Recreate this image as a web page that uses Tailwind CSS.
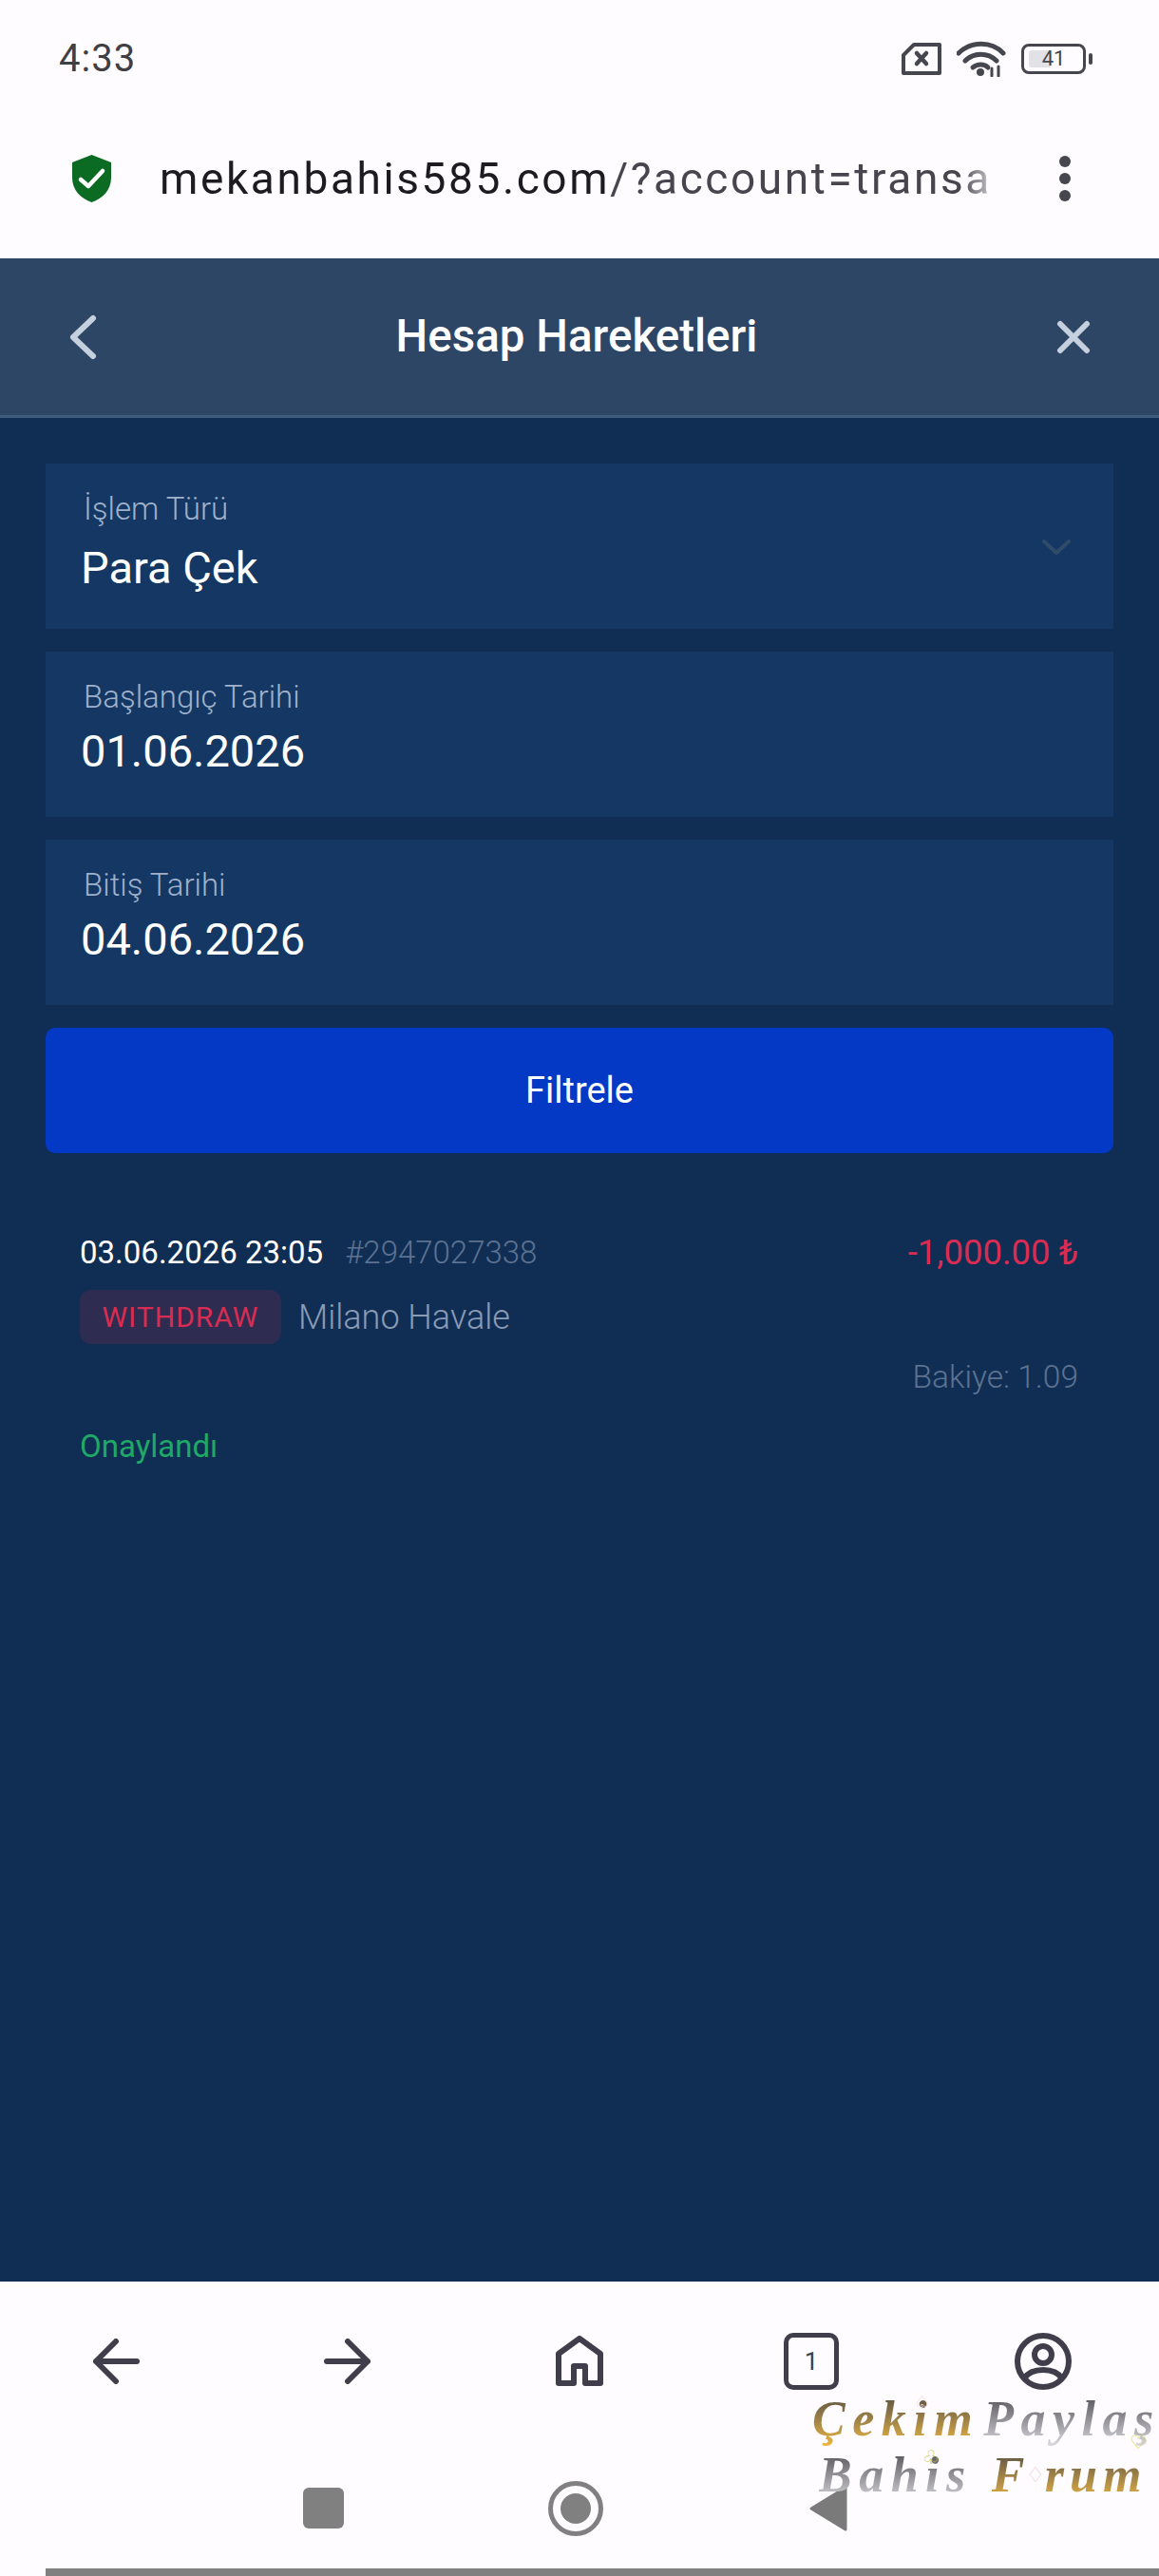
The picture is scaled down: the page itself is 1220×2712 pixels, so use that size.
<!DOCTYPE html>
<html lang="tr">
<head>
    <meta charset="UTF-8">
    <meta name="viewport" content="width=device-width, initial-scale=1.0">
    <title>Hesap Hareketleri</title>
    <script src="https://cdn.jsdelivr.net/npm/@tailwindcss/browser@4"></script>
</head>
<body class="bg-[#fefcff] [font-family:Roboto,sans-serif]">
<div class="relative flex h-[2712px] w-[1220px] flex-col overflow-hidden">

    <!-- status bar -->
    <div class="flex h-[124px] shrink-0 items-center justify-between pl-[62px] pr-[70px]">
        <span class="text-[40px] leading-none tracking-[1px] text-[#3f3f44]">4:33</span>
        <div class="flex items-center">
            <svg class="h-[36px] w-[44px]" viewBox="0 0 44 36" fill="none" stroke="#46464f" stroke-width="4" stroke-linejoin="round">
                <path d="M14 3H41V33H3V14Z"/>
                <path d="M17 12L27 23M27 12L17 23" stroke-width="4.5" stroke-linecap="round"/>
            </svg>
            <svg class="ml-[15px] h-[38px] w-[52px]" viewBox="0 0 52 38" fill="none" stroke="#46464f" stroke-width="5" stroke-linecap="round">
                <path d="M2 13C15 0 37 0 49 13"/>
                <path d="M9 21C18 12 33 12 42 21"/>
                <path d="M17 28C22 24 29 24 33 28"/>
                <circle cx="25" cy="33" r="4" fill="#46464f" stroke="none"/>
                <path d="M37 29V37M44 27V37" stroke-width="3"/>
            </svg>
            <div class="relative ml-[16px] flex h-[32px] w-[68px] items-center justify-center rounded-[8px] border-[3px] border-[#46464f]">
                <div class="absolute left-[5px] top-[4px] h-[18px] w-[24px] rounded-[3px] bg-[#e2e1e6]"></div>
                <span class="relative text-[22px] leading-none text-[#46464f]">41</span>
            </div>
            <div class="ml-[3px] h-[12px] w-[4px] rounded-full bg-[#46464f]"></div>
        </div>
    </div>

    <!-- url bar -->
    <div class="flex h-[148px] shrink-0 items-start pb-[20px]">
        <div class="flex h-[128px] w-full items-center">
            <svg class="ml-[76px] h-[50px] w-[41px]" viewBox="0 0 41 50">
                <path d="M20.5 0L41 8V24C41 37 32 46 20.5 50C9 46 0 37 0 24V8Z" fill="#0b6b23"/>
                <path d="M9 26L17 33L32 17" fill="none" stroke="#fff" stroke-width="4.5" stroke-linecap="round" stroke-linejoin="round"/>
            </svg>
            <div class="ml-[51px] w-[878px] whitespace-nowrap text-[46px] leading-none tracking-[2.6px] text-[#49454f] [mask-image:linear-gradient(to_right,black_96%,rgba(0,0,0,0.25)_100%)]"><span class="text-[#1c1b1f]">mekanbahis585.com</span>/?account=transa</div>
            <div class="ml-[69px] flex flex-col gap-[6px]">
                <div class="h-[12px] w-[12px] rounded-full bg-[#46464f]"></div>
                <div class="h-[12px] w-[12px] rounded-full bg-[#46464f]"></div>
                <div class="h-[12px] w-[12px] rounded-full bg-[#46464f]"></div>
            </div>
        </div>
    </div>

    <!-- page -->
    <div class="flex-1 bg-[#102e54]">
        <header class="flex h-[168px] items-center justify-between border-b-[3px] border-[#3f5b7c] bg-[#2e4665] px-[72px]">
            <svg class="h-[48px] w-[30px]" viewBox="0 0 30 48" fill="none" stroke="#c5d0df" stroke-width="6" stroke-linecap="round" stroke-linejoin="round">
                <path d="M26 4L5 24L26 44"/>
            </svg>
            <h1 class="text-[47.5px] font-medium leading-none text-white">Hesap Hareketleri</h1>
            <svg class="h-[36px] w-[36px]" viewBox="0 0 36 36" fill="none" stroke="#c5d0df" stroke-width="6" stroke-linecap="round">
                <path d="M4 4L32 32M32 4L4 32"/>
            </svg>
        </header>

        <div class="flex flex-col gap-[24px] px-[48px] pt-[48px]">
            <div class="relative h-[174px] bg-[#143863] pl-[37px]">
                <div class="ml-[3px] pt-[30px] text-[33px] font-light leading-[36px] text-[#9fb1cb]">İşlem Türü</div>
                <div class="mt-[17px] text-[47px] leading-[54px] text-white">Para Çek</div>
                <svg class="absolute right-[44px] top-[79px] h-[18px] w-[32px]" viewBox="0 0 32 18" fill="none" stroke="#2f4b69" stroke-width="4" stroke-linecap="round">
                    <path d="M3 3L16 15L29 3"/>
                </svg>
            </div>
            <div class="h-[174px] bg-[#143863] pl-[37px]">
                <div class="ml-[3px] pt-[30px] text-[33px] font-light leading-[36px] text-[#9fb1cb]">Başlangıç Tarihi</div>
                <div class="mt-[12px] text-[47px] leading-[54px] text-white">01.06.2026</div>
            </div>
            <div class="h-[174px] bg-[#143863] pl-[37px]">
                <div class="ml-[3px] pt-[30px] text-[33px] font-light leading-[36px] text-[#9fb1cb]">Bitiş Tarihi</div>
                <div class="mt-[12px] text-[47px] leading-[54px] text-white">04.06.2026</div>
            </div>
            <button class="flex h-[132px] items-center justify-center rounded-[10px] bg-[#0339c4] text-[38px] text-white">Filtrele</button>
        </div>

        <!-- transaction -->
        <div class="mt-[80px] pl-[84px] pr-[85px]">
            <div class="flex h-[50px] items-center justify-between">
                <div class="flex items-center gap-[23px]">
                    <span class="text-[33px] text-white">03.06.2026 23:05</span>
                    <span class="text-[33px] font-light text-[#5c7291]">#2947027338</span>
                </div>
                <span class="text-[36.5px] text-[#d92c52]">-1,000.00 ₺</span>
            </div>
            <div class="mt-[14px] flex items-center gap-[18px]">
                <span class="flex h-[57px] w-[212px] items-center justify-center rounded-[12px] bg-[#2e2c50] text-[30px] tracking-[1px] text-[#d92c52]">WITHDRAW</span>
                <span class="text-[36px] font-light text-[#8a9bb5]">Milano Havale</span>
            </div>
            <div class="mt-[15px] h-[40px] text-right text-[33.5px] font-light leading-[40px] text-[#5c7291]">Bakiye: 1.09</div>
            <div class="mt-[33px] h-[40px] text-[33px] leading-[40px] text-[#1fa866]">Onaylandı</div>
        </div>
    </div>

    <!-- browser toolbar + system nav -->
    <div class="flex h-[310px] shrink-0 flex-col bg-[#fefcff]">
        <div class="grid h-[168px] grid-cols-5 items-center">
            <div class="flex justify-center">
                <svg class="h-[48px] w-[50px]" viewBox="0 0 50 48" fill="none" stroke="#403e4a" stroke-width="6" stroke-linecap="round" stroke-linejoin="round">
                    <path d="M25 3L4 24L25 45M4 24H47"/>
                </svg>
            </div>
            <div class="flex justify-center">
                <svg class="h-[48px] w-[50px]" viewBox="0 0 50 48" fill="none" stroke="#403e4a" stroke-width="6" stroke-linecap="round" stroke-linejoin="round">
                    <path d="M25 3L46 24L25 45M46 24H3"/>
                </svg>
            </div>
            <div class="flex justify-center">
                <svg class="h-[54px] w-[50px]" viewBox="0 0 50 54" fill="none" stroke="#403e4a" stroke-width="6" stroke-linejoin="round">
                    <path d="M25 3L47 19V50H31V32H19V50H3V19Z"/>
                </svg>
            </div>
            <div class="flex justify-center">
                <div class="flex h-[60px] w-[58px] items-center justify-center rounded-[10px] border-[5px] border-[#403e4a] text-[26px] leading-none text-[#403e4a]">1</div>
            </div>
            <div class="flex justify-center">
                <svg class="h-[60px] w-[60px]" viewBox="0 0 60 60" fill="none" stroke="#403e4a" stroke-width="6">
                    <circle cx="30" cy="30" r="27"/>
                    <circle cx="30" cy="23" r="9"/>
                    <path d="M10 48C18 36 42 36 50 48"/>
                </svg>
            </div>
        </div>
        <div class="relative h-[134px]">
            <div class="absolute left-[319px] top-[49px] h-[43px] w-[43px] rounded-[6px] bg-[#808080]"></div>
            <div class="absolute left-[577px] top-[42px] flex h-[58px] w-[58px] items-center justify-center rounded-full border-[5px] border-[#808080]">
                <div class="h-[32px] w-[32px] rounded-full bg-[#808080]"></div>
            </div>
            <svg class="absolute left-[852px] top-[47px] h-[48px] w-[40px]" viewBox="0 0 40 48">
                <path d="M38 2V46L2 24Z" fill="#7a7a7a" stroke="#7a7a7a" stroke-width="3" stroke-linejoin="round"/>
            </svg>
        </div>
        <div class="ml-[48px] h-[8px] bg-[#808080]"></div>
    </div>

    <!-- watermark over the toolbar -->
    <div class="absolute left-[855px] top-[2517px] whitespace-nowrap text-[52px] font-bold italic leading-[59px] tracking-[7.5px] [font-family:'Liberation_Serif',serif]">
        <div class="flex">
            <span class="bg-linear-to-b from-[#4f4a40] to-[#f0b93c] bg-clip-text text-transparent">Çekim</span>
            <span class="ml-[4px] bg-linear-to-b from-[#4a4a4f] to-[#dddce2] bg-clip-text text-transparent">Paylaş</span>
        </div>
        <div class="ml-[7px] flex">
            <span class="bg-linear-to-b from-[#4a4a4f] to-[#dddce2] bg-clip-text text-transparent">Bahis</span>
            <span class="ml-[20px] bg-linear-to-b from-[#4f4a40] to-[#f0b93c] bg-clip-text text-transparent">F</span>
            <span class="ml-[-6px] self-center text-[22px] font-normal not-italic leading-none tracking-normal text-[#e8c9c9] [font-family:'DejaVu_Sans',sans-serif]">♢</span>
            <span class="bg-linear-to-b from-[#4f4a40] to-[#f0b93c] bg-clip-text tracking-[6px] text-transparent">rum</span>
        </div>
    </div>
    <span class="absolute left-[962px] top-[2519px] text-[20px] leading-none text-[#f3d5dc] [font-family:'DejaVu_Sans',sans-serif]">♤</span>
    <span class="absolute left-[1189px] top-[2561px] text-[20px] leading-none text-[#d9d24a] [font-family:'DejaVu_Sans',sans-serif]">♡</span>
    <span class="absolute left-[971px] top-[2577px] text-[20px] leading-none text-[#cfc93a] [font-family:'DejaVu_Sans',sans-serif]">♧</span>
</div>
</body>
</html>
